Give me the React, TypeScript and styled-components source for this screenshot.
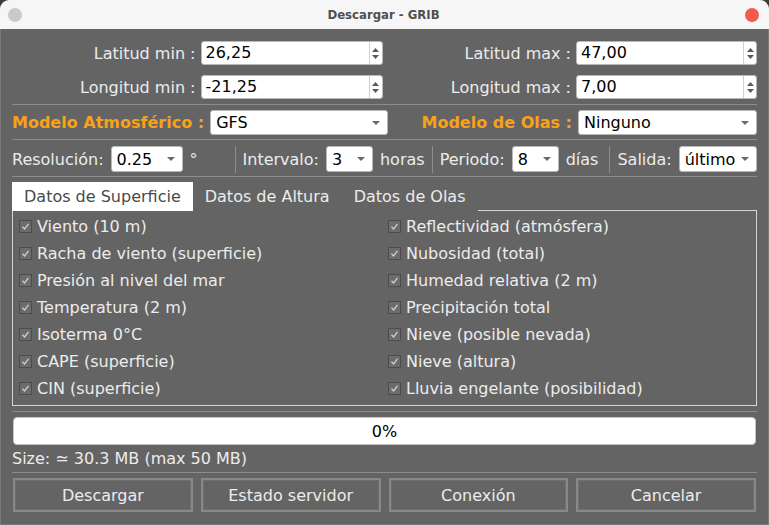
import React from 'react';
import styled, { createGlobalStyle } from 'styled-components';

const GlobalStyle = createGlobalStyle`
  html, body {
    margin: 0;
    padding: 0;
    background: #3c3c3c;
  }
  * {
    box-sizing: border-box;
  }
`;

const Window = styled.div`
  width: 769px;
  height: 525px;
  display: flex;
  flex-direction: column;
  border-radius: 9px 9px 0 0;
  overflow: hidden;
  font-family: 'DejaVu Sans', 'Noto Sans', sans-serif;
  font-size: 16px;
  color: #ececec;
`;

const TitleBar = styled.div`
  height: 29px;
  flex: none;
  background: #f6f6f6;
  display: flex;
  align-items: center;
  justify-content: space-between;
  padding: 0 10px 0 8px;
`;

const Title = styled.span`
  font-family: 'DejaVu Sans Condensed', 'Liberation Sans Narrow', 'DejaVu Sans', sans-serif;
  font-size: 13px;
  font-weight: 600;
  color: #505050;
`;

const Dot = styled.span<{ $color: string }>`
  width: 14px;
  height: 14px;
  border-radius: 50%;
  background: ${(p) => p.$color};
`;

const Body = styled.div`
  flex: 1;
  background: #646464;
  border: 1px solid #7a7a7a;
  border-top: none;
  padding: 12px 11px 0 11px;
  display: flex;
  flex-direction: column;
`;

const CoordGrid = styled.div`
  display: grid;
  grid-template-columns: 1fr 182px 1fr 181px;
  column-gap: 5px;
  row-gap: 10px;
  align-items: center;
`;

const RightLabel = styled.span`
  text-align: right;
  white-space: nowrap;
`;

const Divider = styled.div<{ $top: number; $bottom: number }>`
  height: 1px;
  flex: none;
  background: #8c8c8c;
  margin-top: ${(p) => p.$top}px;
  margin-bottom: ${(p) => p.$bottom}px;
`;

const SpinBox = styled.div`
  height: 24px;
  background: #ffffff;
  border: 1px solid #b8b8b8;
  border-radius: 3px;
  display: flex;
  align-items: stretch;
  color: #000;
`;

const SpinValue = styled.span`
  flex: 1;
  padding-left: 4px;
  line-height: 22px;
`;

const SpinArrows = styled.span`
  width: 13px;
  border-left: 1px solid #d0d0d0;
  display: flex;
  flex-direction: column;
  align-items: center;
  justify-content: center;
  gap: 3px;
`;

const ModelRow = styled.div`
  display: grid;
  grid-template-columns: auto 178px 1fr 179px;
  column-gap: 6px;
  align-items: center;
`;

const ModelLabel = styled.span<{ $right?: boolean }>`
  color: #f9a11a;
  font-weight: bold;
  white-space: nowrap;
  text-align: ${(p) => (p.$right ? 'right' : 'left')};
`;

const Combo = styled.div<{ $width?: number; $height?: number }>`
  width: ${(p) => (p.$width ? `${p.$width}px` : 'auto')};
  height: ${(p) => p.$height || 25}px;
  background: #ffffff;
  border: 1px solid #b8b8b8;
  border-radius: 3px;
  display: flex;
  align-items: center;
  justify-content: space-between;
  padding: 0 7px 0 5px;
  color: #000;
  flex: none;
`;

const OptionsRow = styled.div`
  display: flex;
  align-items: center;
  gap: 7px;
  height: 26px;
`;

const Unit = styled.span<{ $after?: number }>`
  margin-right: ${(p) => p.$after || 0}px;
  white-space: nowrap;
`;

const VSep = styled.span`
  flex: none;
  width: 1px;
  height: 27px;
  background: #8c8c8c;
`;

const TabBar = styled.div`
  display: flex;
  height: 29px;
  flex: none;
`;

const Tab = styled.div<{ $active?: boolean }>`
  padding: 0 12px;
  line-height: 29px;
  background: ${(p) => (p.$active ? '#ffffff' : 'transparent')};
  color: ${(p) => (p.$active ? '#4a4a4a' : '#ececec')};
  white-space: nowrap;
`;

const TabFill = styled.div`
  flex: 1;
  border-bottom: 1px solid #d4d4d4;
`;

const Pane = styled.div`
  border: 1px solid #d4d4d4;
  border-top: none;
  height: 195px;
  flex: none;
  padding: 2px 6px;
  display: grid;
  grid-template-columns: 369px 1fr;
  grid-auto-flow: column;
  grid-template-rows: repeat(7, 27px);
`;

const CheckRow = styled.label`
  display: flex;
  align-items: center;
  gap: 5px;
  white-space: nowrap;
`;

const Box = styled.span`
  width: 13px;
  height: 13px;
  border: 1px solid #4c4c4c;
  background: #6c6c6c;
  display: flex;
  align-items: center;
  justify-content: center;
  flex: none;
`;

const Progress = styled.div`
  height: 28px;
  flex: none;
  background: #ffffff;
  border: 1px solid #c4c4c4;
  border-radius: 4px;
  color: #000;
  display: flex;
  align-items: center;
  justify-content: center;
  margin: 0 1px;
`;

const SizeText = styled.div`
  height: 16px;
  line-height: 16px;
  margin-top: 6px;
`;

const Buttons = styled.div`
  display: grid;
  grid-template-columns: repeat(4, 1fr);
  column-gap: 8px;
  padding: 0 1px;
`;

const Button = styled.button`
  height: 34px;
  background: #646464;
  border: 2px solid #888888;
  box-shadow: inset 0 0 0 1px #6e6e6e;
  color: #ececec;
  font-family: 'DejaVu Sans', 'Noto Sans', sans-serif;
  font-size: 16px;
  padding: 0;
  cursor: pointer;
`;

const Arrow = ({ up }: { up?: boolean }) => (
  <svg width="7" height="4" viewBox="0 0 7 4">
    <path d={up ? 'M0 4 L3.5 0 L7 4 Z' : 'M0 0 L3.5 4 L7 0 Z'} fill="#5a5a5a" />
  </svg>
);

const DropArrow = () => (
  <svg width="8" height="4" viewBox="0 0 8 4">
    <path d="M0 0 L4 4 L8 0 Z" fill="#6a6a6a" />
  </svg>
);

const Spin = ({ value }: { value: string }) => (
  <SpinBox>
    <SpinValue>{value}</SpinValue>
    <SpinArrows>
      <Arrow up />
      <Arrow />
    </SpinArrows>
  </SpinBox>
);

const Select = ({ value, width, height }: { value: string; width?: number; height?: number }) => (
  <Combo $width={width} $height={height}>
    <span>{value}</span>
    <DropArrow />
  </Combo>
);

const Check = ({ label }: { label: string }) => (
  <CheckRow>
    <Box>
      <svg width="9" height="9" viewBox="0 0 9 9">
        <path d="M1.5 4.8 L3.6 7 L7.5 1.8" fill="none" stroke="#cfcfcf" strokeWidth="1.3" />
      </svg>
    </Box>
    {label}
  </CheckRow>
);

const leftItems = [
  'Viento (10 m)',
  'Racha de viento (superficie)',
  'Presión al nivel del mar',
  'Temperatura (2 m)',
  'Isoterma 0°C',
  'CAPE (superficie)',
  'CIN (superficie)',
];

const rightItems = [
  'Reflectividad (atmósfera)',
  'Nubosidad (total)',
  'Humedad relativa (2 m)',
  'Precipitación total',
  'Nieve (posible nevada)',
  'Nieve (altura)',
  'Lluvia engelante (posibilidad)',
];

export default function App() {
  return (
    <>
      <GlobalStyle />
      <Window>
        <TitleBar>
          <Dot $color="#c9c9c9" />
          <Title>Descargar - GRIB</Title>
          <Dot $color="#f25a50" />
        </TitleBar>
        <Body>
          <CoordGrid>
            <RightLabel>Latitud min :</RightLabel>
            <Spin value="26,25" />
            <RightLabel>Latitud max :</RightLabel>
            <Spin value="47,00" />
            <RightLabel>Longitud min :</RightLabel>
            <Spin value="-21,25" />
            <RightLabel>Longitud max :</RightLabel>
            <Spin value="7,00" />
          </CoordGrid>
          <Divider $top={5} $bottom={5} />
          <ModelRow>
            <ModelLabel>Modelo Atmosférico :</ModelLabel>
            <Select value="GFS" />
            <ModelLabel $right>Modelo de Olas :</ModelLabel>
            <Select value="Ninguno" />
          </ModelRow>
          <Divider $top={4} $bottom={6} />
          <OptionsRow>
            <span>Resolución:</span>
            <Select value="0.25" width={72} height={26} />
            <Unit $after={30}>°</Unit>
            <VSep />
            <span>Intervalo:</span>
            <Select value="3" width={47} height={26} />
            <Unit>horas</Unit>
            <VSep />
            <span>Periodo:</span>
            <Select value="8" width={47} height={26} />
            <Unit $after={4}>días</Unit>
            <VSep />
            <span>Salida:</span>
            <Select value="último" width={78} height={26} />
          </OptionsRow>
          <Divider $top={4} $bottom={5} />
          <TabBar>
            <Tab $active>Datos de Superficie</Tab>
            <Tab>Datos de Altura</Tab>
            <Tab>Datos de Olas</Tab>
            <TabFill />
          </TabBar>
          <Pane>
            {leftItems.map((t) => (
              <Check key={t} label={t} />
            ))}
            {rightItems.map((t) => (
              <Check key={t} label={t} />
            ))}
          </Pane>
          <Divider $top={5} $bottom={5} />
          <Progress>0%</Progress>
          <SizeText>Size: ≃ 30.3 MB (max 50 MB)</SizeText>
          <Divider $top={5} $bottom={5} />
          <Buttons>
            <Button>Descargar</Button>
            <Button>Estado servidor</Button>
            <Button>Conexión</Button>
            <Button>Cancelar</Button>
          </Buttons>
        </Body>
      </Window>
    </>
  );
}
